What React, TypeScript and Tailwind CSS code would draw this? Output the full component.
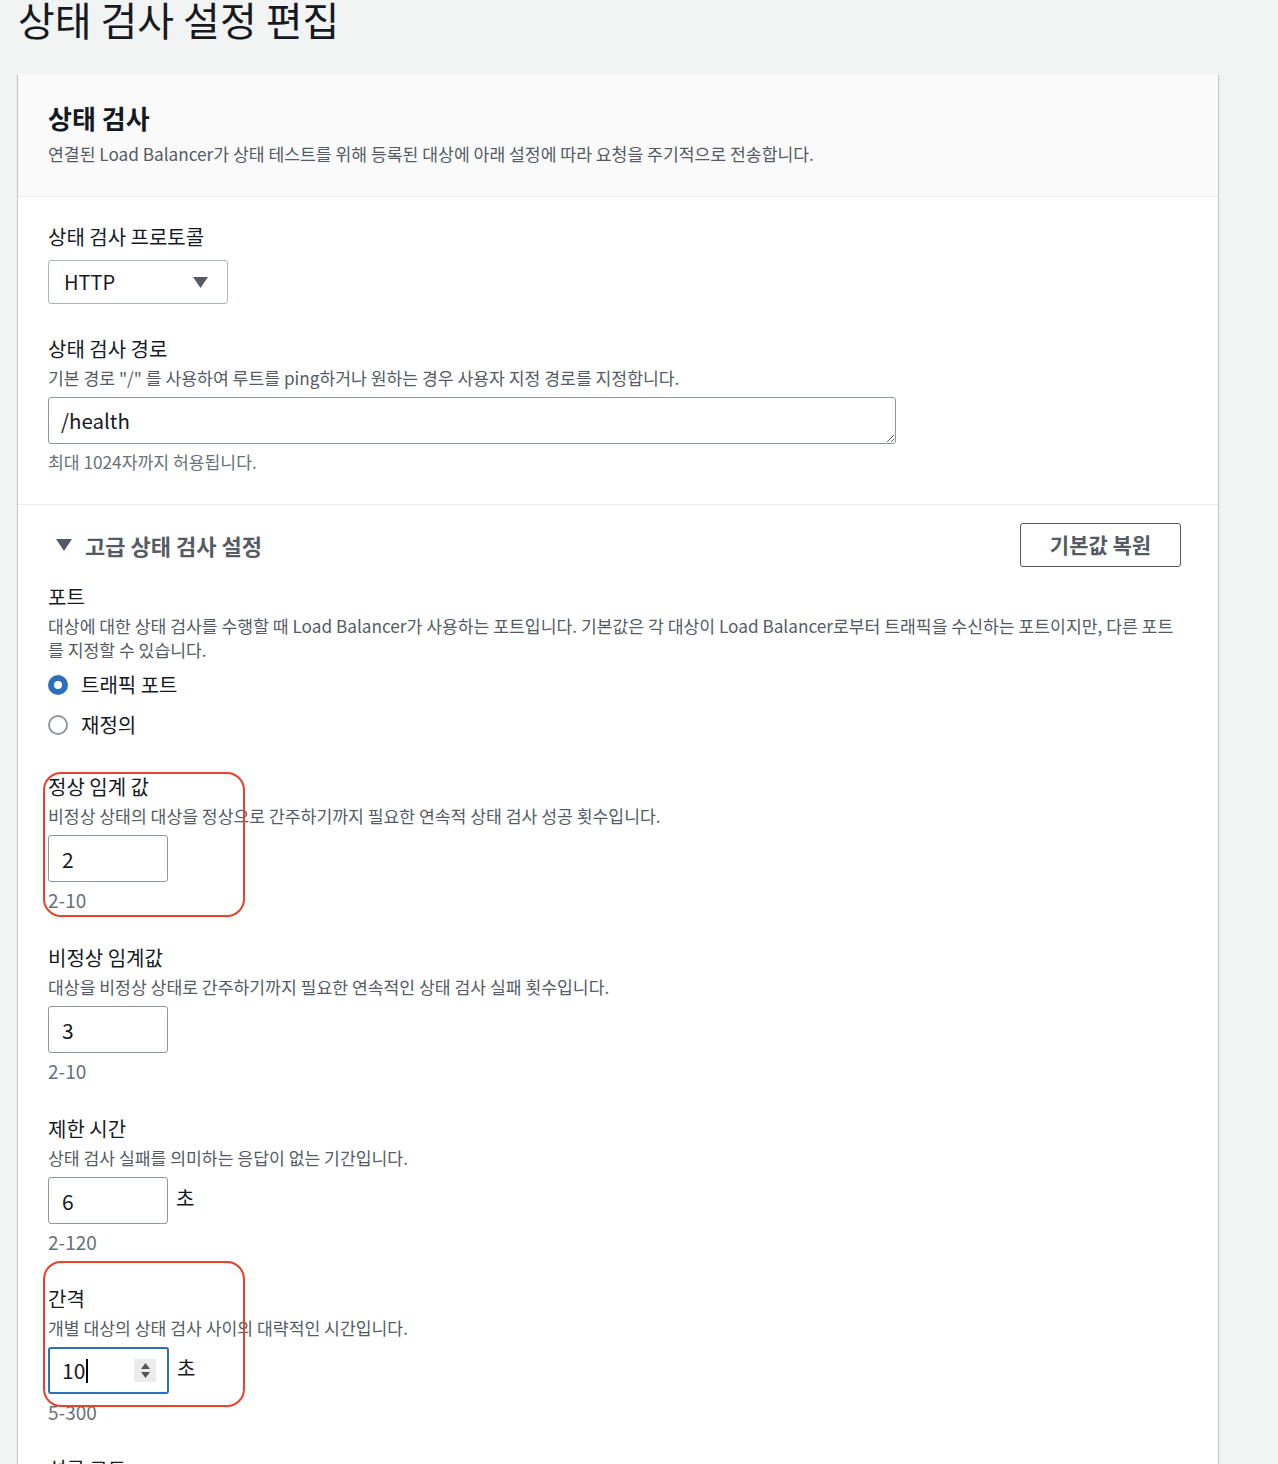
import type { ReactNode } from 'react'

const font = { fontFamily: '"Noto Sans CJK KR", "Noto Sans", sans-serif' }

function Field({
  label,
  desc,
  children,
  className = '',
}: {
  label: string
  desc?: ReactNode
  children?: ReactNode
  className?: string
}) {
  return (
    <div className={className}>
      <div className="text-[20px] leading-[26px] text-[#16191f]">{label}</div>
      {desc && <div className="mt-[4px] text-[17.2px] leading-[24px] text-[#545b64]">{desc}</div>}
      {children}
    </div>
  )
}

function NumberField({
  label,
  desc,
  value,
  hint,
  unit,
  focused,
  className = '',
}: {
  label: string
  desc: string
  value: string
  hint: string
  unit?: string
  focused?: boolean
  className?: string
}) {
  return (
    <Field label={label} desc={desc} className={className}>
      <div className="mt-[7px] flex items-start gap-[8px]">
        {focused ? (
          <div className="relative flex h-[47px] w-[121px] items-center rounded-[3px] border-2 border-[#2f6fba] bg-white pl-[12px]">
            <span className="text-[21px] leading-none text-[#16191f]">{value}</span>
            <span className="ml-[1px] h-[24px] w-[2px] bg-black" />
            {/* number spinner */}
            <span className="absolute top-[10px] right-[11px] flex h-[23px] w-[22px] flex-col items-center justify-center gap-[3px] bg-[#ececec]">
              <svg width="9" height="6" viewBox="0 0 9 6"><path d="M4.5 0L9 6H0z" fill="#555" /></svg>
              <svg width="9" height="6" viewBox="0 0 9 6"><path d="M0 0h9L4.5 6z" fill="#555" /></svg>
            </span>
          </div>
        ) : (
          <input
            defaultValue={value}
            className="h-[47px] w-[120px] rounded-[3px] border border-[#8e9899] bg-white px-[13px] text-[21px] text-[#16191f] outline-none"
          />
        )}
        {unit && <span className="pt-[8px] text-[20px] leading-[26px] text-[#16191f]">{unit}</span>}
      </div>
      <div className="mt-[6px] text-[19px] leading-[24px] text-[#687078]">{hint}</div>
    </Field>
  )
}

function Radio({ checked, label }: { checked?: boolean; label: string }) {
  return (
    <div className="flex h-[24px] items-center gap-[13px]">
      {checked ? (
        <span className="flex h-[20px] w-[20px] items-center justify-center rounded-full bg-[#2f6fba]">
          <span className="h-[8px] w-[8px] rounded-full bg-white" />
        </span>
      ) : (
        <span className="h-[20px] w-[20px] rounded-full border-2 border-[#8e9899] bg-white" />
      )}
      <span className="text-[20px] text-[#16191f]">{label}</span>
    </div>
  )
}

export default function App() {
  return (
    <div className="min-h-screen bg-[#f2f3f3] pl-[18px]" style={font}>
      <h1 className="-mt-[6px] text-[40px] leading-[50px] font-normal text-[#16191f]">상태 검사 설정 편집</h1>

      <div className="mt-[30px] w-[1200px] bg-white shadow-[0_1px_1px_0_rgba(0,28,36,0.3),1px_1px_1px_0_rgba(0,28,36,0.15),-1px_1px_1px_0_rgba(0,28,36,0.15)]">
        {/* header */}
        <div className="border-b border-[#eaeded] bg-[#fafafa] px-[30px] pt-[28px] pb-[30px]">
          <h2 className="text-[26px] leading-[32px] font-bold text-[#16191f]">상태 검사</h2>
          <p className="mt-[8px] text-[17.2px] leading-[24px] text-[#545b64]">
            연결된 Load Balancer가 상태 테스트를 위해 등록된 대상에 아래 설정에 따라 요청을 주기적으로 전송합니다.
          </p>
        </div>

        {/* basic settings */}
        <div className="border-b border-[#eaeded] px-[30px] pt-[27px] pb-[30px]">
          <Field label="상태 검사 프로토콜">
            <div className="mt-[10px] flex h-[44px] w-[180px] items-center justify-between rounded-[3px] border border-[#aab7b8] bg-white pr-[19px] pl-[15px]">
              <span className="text-[20px] text-[#16191f]">HTTP</span>
              <svg width="15" height="11" viewBox="0 0 15 11"><path d="M0 0h15L7.5 11z" fill="#545b64" /></svg>
            </div>
          </Field>

          <Field
            className="mt-[32px]"
            label="상태 검사 경로"
            desc={'기본 경로 "/" 를 사용하여 루트를 ping하거나 원하는 경우 사용자 지정 경로를 지정합니다.'}
          >
            <textarea
              defaultValue="/health"
              className="mt-[7px] block h-[47px] w-[848px] resize-y rounded-[3px] border border-[#8e9899] bg-white px-[12px] py-[8px] text-[20.5px] leading-[28px] text-[#16191f] outline-none"
            />
            <div className="mt-[6px] text-[17.2px] leading-[24px] text-[#687078]">최대 1024자까지 허용됩니다.</div>
          </Field>
        </div>

        {/* advanced settings */}
        <div className="px-[30px] pt-[18px] pb-[40px]">
          <div className="flex h-[44px] items-center justify-between">
            <div className="flex items-center gap-[13px] pl-[8px]">
              <svg width="16" height="12" viewBox="0 0 16 12"><path d="M0 0h16L8 12z" fill="#545b64" /></svg>
              <span className="text-[22px] font-bold text-[#545b64]">고급 상태 검사 설정</span>
            </div>
            <button className="mr-[7px] h-[44px] w-[161px] rounded-[3px] border border-[#545b64] bg-white text-[21px] font-bold text-[#545b64]">
              기본값 복원
            </button>
          </div>

          <Field
            className="mt-[17px]"
            label="포트"
            desc="대상에 대한 상태 검사를 수행할 때 Load Balancer가 사용하는 포트입니다. 기본값은 각 대상이 Load Balancer로부터 트래픽을 수신하는 포트이지만, 다른 포트를 지정할 수 있습니다."
          >
            <div className="mt-[11px] flex flex-col gap-[16px]">
              <Radio checked label="트래픽 포트" />
              <Radio label="재정의" />
            </div>
          </Field>

          <div className="relative mt-[37px]">
            <NumberField
              label="정상 임계 값"
              desc="비정상 상태의 대상을 정상으로 간주하기까지 필요한 연속적 상태 검사 성공 횟수입니다."
              value="2"
              hint="2-10"
            />
            <div className="pointer-events-none absolute -top-[2px] -left-[5px] h-[145px] w-[202px] rounded-[18px] border-2 border-[#e8412c]" />
          </div>

          <NumberField
            className="mt-[33px]"
            label="비정상 임계값"
            desc="대상을 비정상 상태로 간주하기까지 필요한 연속적인 상태 검사 실패 횟수입니다."
            value="3"
            hint="2-10"
          />

          <NumberField
            className="mt-[33px]"
            label="제한 시간"
            desc="상태 검사 실패를 의미하는 응답이 없는 기간입니다."
            value="6"
            hint="2-120"
            unit="초"
          />

          <div className="relative mt-[32px]">
            <NumberField
              label="간격"
              desc="개별 대상의 상태 검사 사이의 대략적인 시간입니다."
              value="10"
              hint="5-300"
              unit="초"
              focused
            />
            <div className="pointer-events-none absolute -top-[25px] -left-[5px] h-[146px] w-[202px] rounded-[18px] border-2 border-[#e8412c]" />
          </div>

          <Field className="mt-[32px]" label="성공 코드" desc="대상에서 성공적인 응답을 확인할 때 사용할 HTTP 코드입니다.">
            <input
              defaultValue="200"
              className="mt-[7px] h-[47px] w-[400px] rounded-[3px] border border-[#8e9899] bg-white px-[13px] text-[21px] text-[#16191f] outline-none"
            />
          </Field>
        </div>
      </div>
    </div>
  )
}
